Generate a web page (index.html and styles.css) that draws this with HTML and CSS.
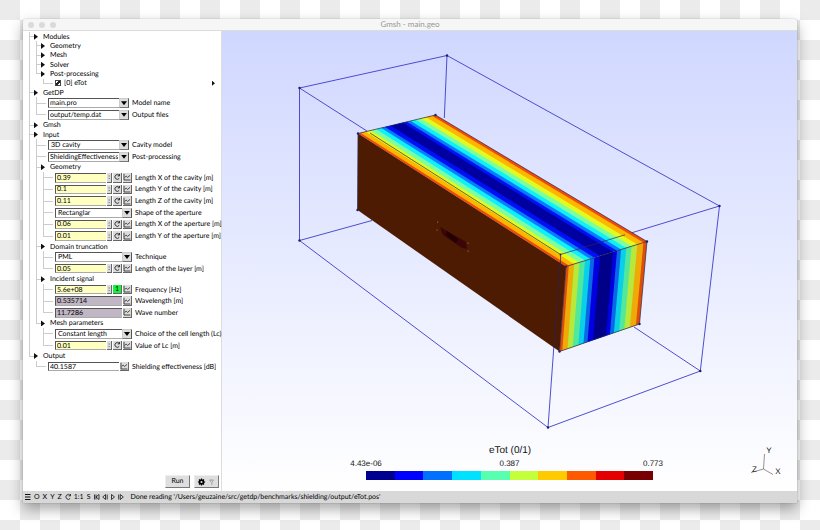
FILE: index.html
```html
<!DOCTYPE html>
<html lang="en">
<head>
<meta charset="utf-8">
<title>Gmsh - main.geo</title>
<link rel="stylesheet" href="styles.css">
</head>
<body>
<svg class="defs" aria-hidden="true">
  <symbol id="reload" viewBox="0 0 8 8"><path d="M6.2 2.4A2.4 2.4 0 1 0 6.2 5.4M6.5 1v1.9H4.6" fill="none" stroke="#222" stroke-width=".9"/></symbol>
  <symbol id="graph" viewBox="0 0 8 8"><path d="M1 .8V7H7.4M1.6 4.4L3.2 3.2 4.6 4.4 7 2.4" fill="none" stroke="#222" stroke-width=".8"/></symbol>
</svg>
<main class="window">
  <header class="titlebar">
    <span class="lights"><i></i><i></i><i></i></span>
    <h1>Gmsh - main.geo</h1>
  </header>
  <div class="body">
    <aside class="sidebar">
      <div class="tree">
        <div class="row"><i class="tee"></i><i class="caret"></i><span>Modules</span></div>
        <div class="row"><i class="line"></i><i class="tee"></i><i class="caret"></i><span>Geometry</span></div>
        <div class="row"><i class="line"></i><i class="tee"></i><i class="caret"></i><span>Mesh</span></div>
        <div class="row"><i class="line"></i><i class="tee"></i><i class="caret"></i><span>Solver</span></div>
        <div class="row"><i class="line"></i><i class="elbow"></i><i class="caret"></i><span>Post-processing</span></div>
        <div class="row"><i class="line"></i><i class="blank"></i><i class="elbow wide"></i><input class="check" type="checkbox" id="etot" checked><label for="etot">[0] eTot</label><i class="caret end"></i></div>
        <div class="row"><i class="tee"></i><i class="caret"></i><span>GetDP</span></div>
        <div class="row field"><i class="line"></i><i class="tee wide"></i><span class="control"><input type="text" id="model" value="main.pro"><button class="drop" aria-label="Choose model"></button></span><label for="model">Model name</label></div>
        <div class="row field"><i class="line"></i><i class="elbow wide"></i><span class="control"><input type="text" id="out" value="output/temp.dat"><button class="drop" aria-label="Choose output"></button></span><label for="out">Output files</label></div>
        <div class="row"><i class="tee"></i><i class="caret"></i><span>Gmsh</span></div>
        <div class="row"><i class="tee"></i><i class="caret"></i><span>Input</span></div>
        <div class="row field"><i class="line"></i><i class="tee wide"></i><span class="control"><select id="cavity"><option>3D cavity</option></select><i class="drop"></i></span><label for="cavity">Cavity model</label></div>
        <div class="row field"><i class="line"></i><i class="tee wide"></i><span class="control"><input type="text" id="post" value="ShieldingEffectiveness"><button class="drop" aria-label="Choose post-processing"></button></span><label for="post">Post-processing</label></div>
        <div class="row"><i class="line"></i><i class="tee"></i><i class="caret"></i><span>Geometry</span></div>
        <div class="row field"><i class="line"></i><i class="line"></i><i class="tee wide"></i><span class="control sub"><input class="edit" type="text" id="lx" value="0.39"><button class="step">:</button><button aria-label="Loop"><svg><use href="#reload"/></svg></button><button aria-label="Graph"><svg><use href="#graph"/></svg></button></span><label for="lx">Length X of the cavity [m]</label></div>
        <div class="row field"><i class="line"></i><i class="line"></i><i class="tee wide"></i><span class="control sub"><input class="edit" type="text" id="ly" value="0.1"><button class="step">:</button><button aria-label="Loop"><svg><use href="#reload"/></svg></button><button aria-label="Graph"><svg><use href="#graph"/></svg></button></span><label for="ly">Length Y of the cavity [m]</label></div>
        <div class="row field"><i class="line"></i><i class="line"></i><i class="tee wide"></i><span class="control sub"><input class="edit" type="text" id="lz" value="0.11"><button class="step">:</button><button aria-label="Loop"><svg><use href="#reload"/></svg></button><button aria-label="Graph"><svg><use href="#graph"/></svg></button></span><label for="lz">Length Z of the cavity [m]</label></div>
        <div class="row field"><i class="line"></i><i class="line"></i><i class="tee wide"></i><span class="control sub"><select id="shape"><option>Rectanglar</option></select><i class="drop"></i></span><label for="shape">Shape of the aperture</label></div>
        <div class="row field"><i class="line"></i><i class="line"></i><i class="tee wide"></i><span class="control sub"><input class="edit" type="text" id="ax" value="0.06"><button class="step">:</button><button aria-label="Loop"><svg><use href="#reload"/></svg></button><button aria-label="Graph"><svg><use href="#graph"/></svg></button></span><label for="ax">Length X of the aperture [m]</label></div>
        <div class="row field"><i class="line"></i><i class="line"></i><i class="elbow wide"></i><span class="control sub"><input class="edit" type="text" id="ay" value="0.01"><button class="step">:</button><button aria-label="Loop"><svg><use href="#reload"/></svg></button><button aria-label="Graph"><svg><use href="#graph"/></svg></button></span><label for="ay">Length Y of the aperture [m]</label></div>
        <div class="row"><i class="line"></i><i class="tee"></i><i class="caret"></i><span>Domain truncation</span></div>
        <div class="row field"><i class="line"></i><i class="line"></i><i class="tee wide"></i><span class="control sub"><select id="tech"><option>PML</option></select><i class="drop"></i></span><label for="tech">Technique</label></div>
        <div class="row field"><i class="line"></i><i class="line"></i><i class="elbow wide"></i><span class="control sub"><input class="edit" type="text" id="layer" value="0.05"><button class="step">:</button><button aria-label="Loop"><svg><use href="#reload"/></svg></button><button aria-label="Graph"><svg><use href="#graph"/></svg></button></span><label for="layer">Length of the layer [m]</label></div>
        <div class="row"><i class="line"></i><i class="tee"></i><i class="caret"></i><span>Incident signal</span></div>
        <div class="row field"><i class="line"></i><i class="line"></i><i class="tee wide"></i><span class="control sub"><input class="edit" type="text" id="freq" value="5.6e+08"><button class="step">:</button><button class="on">1</button><button aria-label="Graph"><svg><use href="#graph"/></svg></button></span><label for="freq">Frequency [Hz]</label></div>
        <div class="row field"><i class="line"></i><i class="line"></i><i class="tee wide"></i><span class="control sub"><input class="fixed" type="text" id="wave" value="0.535714" readonly><button aria-label="Graph"><svg><use href="#graph"/></svg></button></span><label for="wave">Wavelength [m]</label></div>
        <div class="row field"><i class="line"></i><i class="line"></i><i class="elbow wide"></i><span class="control sub"><input class="fixed" type="text" id="num" value="11.7286" readonly><button aria-label="Graph"><svg><use href="#graph"/></svg></button></span><label for="num">Wave number</label></div>
        <div class="row"><i class="line"></i><i class="elbow"></i><i class="caret"></i><span>Mesh parameters</span></div>
        <div class="row field"><i class="line"></i><i class="blank"></i><i class="tee wide"></i><span class="control sub"><select id="cell"><option>Constant length</option></select><i class="drop"></i></span><label for="cell">Choice of the cell length (Lc)</label></div>
        <div class="row field"><i class="line"></i><i class="blank"></i><i class="elbow wide"></i><span class="control sub"><input class="edit" type="text" id="lc" value="0.01"><button class="step">:</button><button aria-label="Loop"><svg><use href="#reload"/></svg></button><button aria-label="Graph"><svg><use href="#graph"/></svg></button></span><label for="lc">Value of Lc [m]</label></div>
        <div class="row"><i class="elbow"></i><i class="caret"></i><span>Output</span></div>
        <div class="row field"><i class="blank"></i><i class="elbow wide"></i><span class="control"><input type="text" id="shield" value="40.1587"><button aria-label="Graph"><svg><use href="#graph"/></svg></button></span><label for="shield">Shielding effectiveness [dB]</label></div>
      </div>
      <div class="actions">
        <button>Run</button>
        <button aria-label="Options"><svg class="gear" viewBox="0 0 20 8"><circle cx="4.500" cy="4" r="2" fill="none" stroke="#000" stroke-width="1.600"/><path d="M4.500 .4v7.200M.9 4h7.200M2 1.500l5 5M7 1.500l-5 5" stroke="#000" stroke-width="1.100"/><circle cx="4.500" cy="4" r="1.100" fill="#ddd"/><path d="M12.500 2h4l-1.600 2v3M14 4l-1.300-2" fill="none" stroke="#888" stroke-width=".7"/></svg></button>
      </div>
    </aside>
    <section class="scene">
      <svg viewBox="222 31 575 460" role="img" aria-label="Electric field in the cavity">
        <g fill="none" stroke="#3c3cc8" stroke-width=".9">
          <path d="M299.500 88L447 55.500 719.500 206 700.300 371 634 327M447 55.500L444.300 118M299.500 88V240.500L372 220.500M299.500 240.500L548 427.500 700.300 371M719.500 206L560.500 254.500 299.500 88M560.500 254.500L548 427.500"/>
        </g>
        <g>
          <path fill="#ee4a08" d="M358 133.500L435.500 115 647 241.500 566 266.500z"/>
          <path fill="#ffb600" d="M360.700 132.900L432 115.800 643.400 242.600 568.800 265.600z"/>
          <path fill="#e2fa20" d="M365.800 131.700L426.200 117.200 637.300 244.500 574.100 264z"/>
          <path fill="#7dffa0" d="M370.800 130.400L420.800 118.500 631.600 246.300 579.400 262.400z"/>
          <path fill="#10f0fa" d="M376.200 129.200L415.700 119.700 626.300 247.900 585 260.600z"/>
          <path fill="#087cff" d="M381.300 128L410.700 120.900 621.100 249.500 590.300 259z"/>
          <path fill="#0010f4" d="M385.100 127L406.800 121.800 617 250.800 594.400 257.800z"/>
          <path fill="#0000a0" d="M390.600 125.700L403 122.800 613 252 600 256z"/>
        </g>
        <g>
          <path fill="#df4e08" d="M566 266.500L647 241.500 639.500 324 559.500 351.500z"/>
          <path fill="#f0aa08" d="M568.800 265.600L643.400 242.600 635.900 325.200 562.300 350.500z"/>
          <path fill="#b8e83a" d="M574.100 264L637.300 244.500 629.900 327.300 567.500 348.800z"/>
          <path fill="#52e89c" d="M579.400 262.400L631.600 246.300 624.300 329.200 572.700 347z"/>
          <path fill="#08d0e8" d="M585 260.600L626.300 247.900 619.100 331 578.300 345z"/>
          <path fill="#0868e8" d="M590.300 259L621.100 249.500 613.900 332.800 583.500 343.300z"/>
          <path fill="#0000e0" d="M594.400 257.800L617 250.800 609.900 334.200 587.500 341.900z"/>
          <path fill="#000088" d="M600 256L613 252 605.900 335.600 593.100 340z"/>
        </g>
        <path fill="#4c1b02" d="M358 133.500L566 266.500 559.500 351.500 357.500 210z"/>
        <path fill="#3c0508" d="M440 227L466 242 467 249 462 248 443 235z"/>
        <path fill="#200000" d="M447 231L458 239 456 243 446 235z"/>
        <g fill="#806060"><path d="M437 221.500h1.200v1.200h-1.200zM436.500 229.500h1.200v1.200h-1.200zM467.500 242.500h1.200v1.200h-1.200zM467.500 250.500h1.200v1.200h-1.200z"/></g>
        <g fill="none" stroke="#282850" stroke-width=".7">
          <path d="M435.500 115L358 133.500 357.500 210M566 266.500L647 241.500 639.500 324 559.500 351.500 566 266.500M435.500 115L647 241.500"/>
          <path d="M370 133L560.500 254.500 625 234.800M560.500 254.500V266"/>
        </g>
        <path d="M559.800 266L554 347" stroke="#302050" stroke-width=".8"/>
        <g fill="#202060">
          <circle cx="299.500" cy="88" r="1.200"/><circle cx="447" cy="55.500" r="1.200"/><circle cx="719.500" cy="206" r="1.200"/><circle cx="560.500" cy="254.500" r="1"/>
          <circle cx="299.500" cy="240.500" r="1.200"/><circle cx="700.300" cy="371" r="1.200"/><circle cx="548" cy="427.500" r="1.200"/>
          <circle cx="358" cy="133.500" r="1.200"/><circle cx="435.500" cy="115" r="1.200"/><circle cx="647" cy="241.500" r="1.200"/><circle cx="566" cy="266.500" r="1"/>
          <circle cx="357.500" cy="210" r="1.200"/><circle cx="639.500" cy="324" r="1.200"/><circle cx="559.500" cy="351.500" r="1.200"/>
        </g>
        <g class="legend" text-anchor="middle">
          <text class="big" x="510" y="453">eTot (0/1)</text>
          <text x="366" y="466">4.43e-06</text>
          <text x="509.500" y="466">0.387</text>
          <text x="653" y="466">0.773</text>
        </g>
        <g shape-rendering="crispEdges">
          <path fill="#00008f" d="M366 471h29v9h-29z"/><path fill="#0000ff" d="M395 471h28v9h-28z"/><path fill="#0070ff" d="M423 471h29v9h-29z"/><path fill="#00e0ff" d="M452 471h29v9h-29z"/><path fill="#58ffae" d="M481 471h29v9h-29z"/><path fill="#c4ff3c" d="M510 471h28v9h-28z"/><path fill="#ffca00" d="M538 471h29v9h-29z"/><path fill="#ff5a00" d="M567 471h29v9h-29z"/><path fill="#e40000" d="M596 471h28v9h-28z"/><path fill="#780000" d="M624 471h29v9h-29z"/>
        </g>
        <path d="M764.500 454L763.500 469 773 474.500M763.500 469L751 472.500" fill="none" stroke="#666" stroke-width=".7"/>
        <g class="legend" text-anchor="middle"><text x="769" y="453">Y</text><text x="754.500" y="472">Z</text><text x="778" y="474">X</text></g>
      </svg>
    </section>
  </div>
  <footer class="status">
    <button aria-label="Menu"><svg viewBox="0 0 6 8"><path d="M0 1.500h5.500M0 4h5.500M0 6.500h5.500" stroke="#111"/></svg></button>
    <button>O</button><button>X</button><button>Y</button><button>Z</button>
    <button aria-label="Rotate"><svg viewBox="1 0 6 8"><use href="#reload" width="8" height="8"/></svg></button>
    <button>1:1</button><button>S</button>
    <span class="player">
      <button aria-label="Rewind"><svg viewBox="0 0 6 8"><path d="M.5 1.500v5M5 1.500v5L2 4zM2 1.500v5" fill="none" stroke="#111" stroke-width=".8"/></svg></button>
      <button aria-label="Step back"><svg viewBox="0 0 6 8"><path d="M3.500 1.500v5L.7 4zM5.200 1.500v5" fill="none" stroke="#111" stroke-width=".8"/></svg></button>
      <button aria-label="Play"><svg viewBox="0 0 6 8"><path d="M1.500 1.500v5L4.500 4z" fill="none" stroke="#111" stroke-width=".8"/></svg></button>
      <button aria-label="Step forward"><svg viewBox="0 0 6 8"><path d="M.7 1.500v5M2.300 1.500v5L5.300 4z" fill="none" stroke="#111" stroke-width=".8"/></svg></button>
    </span>
    <output>Done reading '/Users/geuzaine/src/getdp/benchmarks/shielding/output/eTot.pos'</output>
  </footer>
</main>
</body>
</html>
```
FILE: styles.css
```css
* { box-sizing: border-box; }

body {
  margin: 0;
  min-height: 100vh;
  display: flex;
  padding: 19px 23px 27px;
  background: repeating-conic-gradient(#fff 0 25%, #ebebeb 0 50%) 0 0 / 40px 40px;
  font: 7px/9px Lato, "Liberation Sans", Arial, sans-serif;
  text-rendering: geometricPrecision;
  color: #000;
}

button, input, select {
  font: inherit;
  color: inherit;
  text-rendering: inherit;
  margin: 0;
  padding: 0;
  border: 0;
  border-radius: 0;
  background: none;
  appearance: none;
}

.defs { position: absolute; width: 0; height: 0; }

.window {
  flex: 1;
  min-width: 0;
  display: flex;
  flex-direction: column;
  background: #fff;
  border-radius: 3px 3px 0 0;
  box-shadow: 0 0 1px rgba(0, 0, 0, .5), 0 6px 14px rgba(0, 0, 0, .35);
}

.titlebar {
  display: grid;
  grid-template-columns: 1fr auto 1fr;
  align-items: center;
  height: 12px;
  padding: 0 5px;
  background: #f6f6f6;
  border-bottom: 1px solid #dcdcdc;
  border-radius: 3px 3px 0 0;
}
.titlebar h1 { margin: 0; font-size: 8px; font-weight: 400; color: #999; }
.lights { display: flex; gap: 5px; }
.lights i { width: 6px; height: 6px; border-radius: 50%; background: #dadada; }

.body { flex: 1; display: flex; min-height: 0; }

.sidebar {
  flex: none;
  width: 199px;
  display: flex;
  flex-direction: column;
  justify-content: space-between;
  border-right: 1px solid #ddd;
}

.tree {
  display: flex;
  flex-direction: column;
  height: 74%;
  margin-top: 1px;
  padding-left: 6px;
}
.row { flex: 4 1 0; min-height: 0; display: flex; align-items: center; white-space: nowrap; }
.row.field { flex-grow: 5; }
.row > span, .row > label { padding-top: 1px; }
.row label { margin-left: 3px; }

.line, .tee, .elbow, .blank {
  flex: none;
  align-self: stretch;
  width: 7px;
  background-repeat: no-repeat;
}
.line {
  background-image: linear-gradient(#ccc, #ccc);
  background-size: 1px 100%;
}
.tee, .elbow {
  width: 5px;
  background-image: linear-gradient(#ccc, #ccc), linear-gradient(#ccc, #ccc);
  background-position: 0 0, 0 50%;
  background-size: 1px 100%, 100% 1px;
}
.elbow { background-size: 1px 50%, 100% 1px; }
.wide { width: 10px; margin-right: 2px; }

.caret {
  flex: none;
  width: 4px;
  height: 6px;
  margin-right: 5px;
  background: #111;
  clip-path: polygon(0 0, 100% 50%, 0 100%);
}
.caret.end { margin: 0 6px 0 auto; width: 3px; height: 5px; }

.check {
  width: 6px;
  height: 6px;
  border: 1px solid #444;
  background: linear-gradient(135deg, #fff 35%, #222 35% 75%, #fff 75%);
}

.row > .control {
  flex: none;
  display: flex;
  align-self: stretch;
  width: 81px;
  margin: 1px 0;
  padding: 0;
  background: #fff;
}
.row > .sub { width: 77px; }
.control input, .control select {
  flex: 1;
  min-width: 0;
  height: 100%;
  padding: 0 1px;
  line-height: 8px;
  border: solid;
  border-width: 1px 0 1px 1px;
  border-color: #555 #999 #aaa #555;
}
.control select { padding-left: 2px; }
.control .edit { background: #ffffc0; }
.control .fixed { background: #c0b6c4; }

.control button, .control .drop {
  flex: none;
  width: 9px;
  margin-left: 1px;
  display: flex;
  align-items: center;
  justify-content: center;
  line-height: 8px;
  background: #dcdcdc;
  border: solid;
  border-width: 0 1px 1px 0;
  border-color: #666;
}
.control .step { width: 5px; }
.control .on { background: #14f03c; }
.control svg { width: 8px; height: 8px; }
.control .drop { width: 10px; margin: 0; border-width: 1px; border-color: #ccc #555 #777 #ccc; }
.drop::before {
  content: "";
  width: 6px;
  height: 4px;
  background: #000;
  clip-path: polygon(0 0, 100% 0, 50% 100%);
}

.actions { display: flex; justify-content: flex-end; gap: 4px; padding: 0 2px 3px; }
.actions button {
  width: 25px;
  height: 13px;
  display: flex;
  align-items: center;
  justify-content: center;
  background: #dedede;
  border: 1px solid;
  border-color: #eee #777 #777 #eee;
}
.gear { width: 20px; height: 8px; }

.scene { flex: 1; min-width: 0; background: linear-gradient(#d0d7ff, #fff); }
.scene > svg { display: block; width: 100%; height: 100%; }
.legend { font-family: "Liberation Sans", Arial, sans-serif; font-size: 8px; fill: #111; }
.legend .big { font-size: 10px; }

.status {
  display: flex;
  align-items: center;
  gap: 3px;
  height: 12px;
  padding: 0 2px;
  background: #d8d8d8;
  white-space: nowrap;
}
.status svg { display: block; width: 6px; height: 8px; }
.player { display: flex; gap: 2px; margin: 0 3px 0 1px; }
```
